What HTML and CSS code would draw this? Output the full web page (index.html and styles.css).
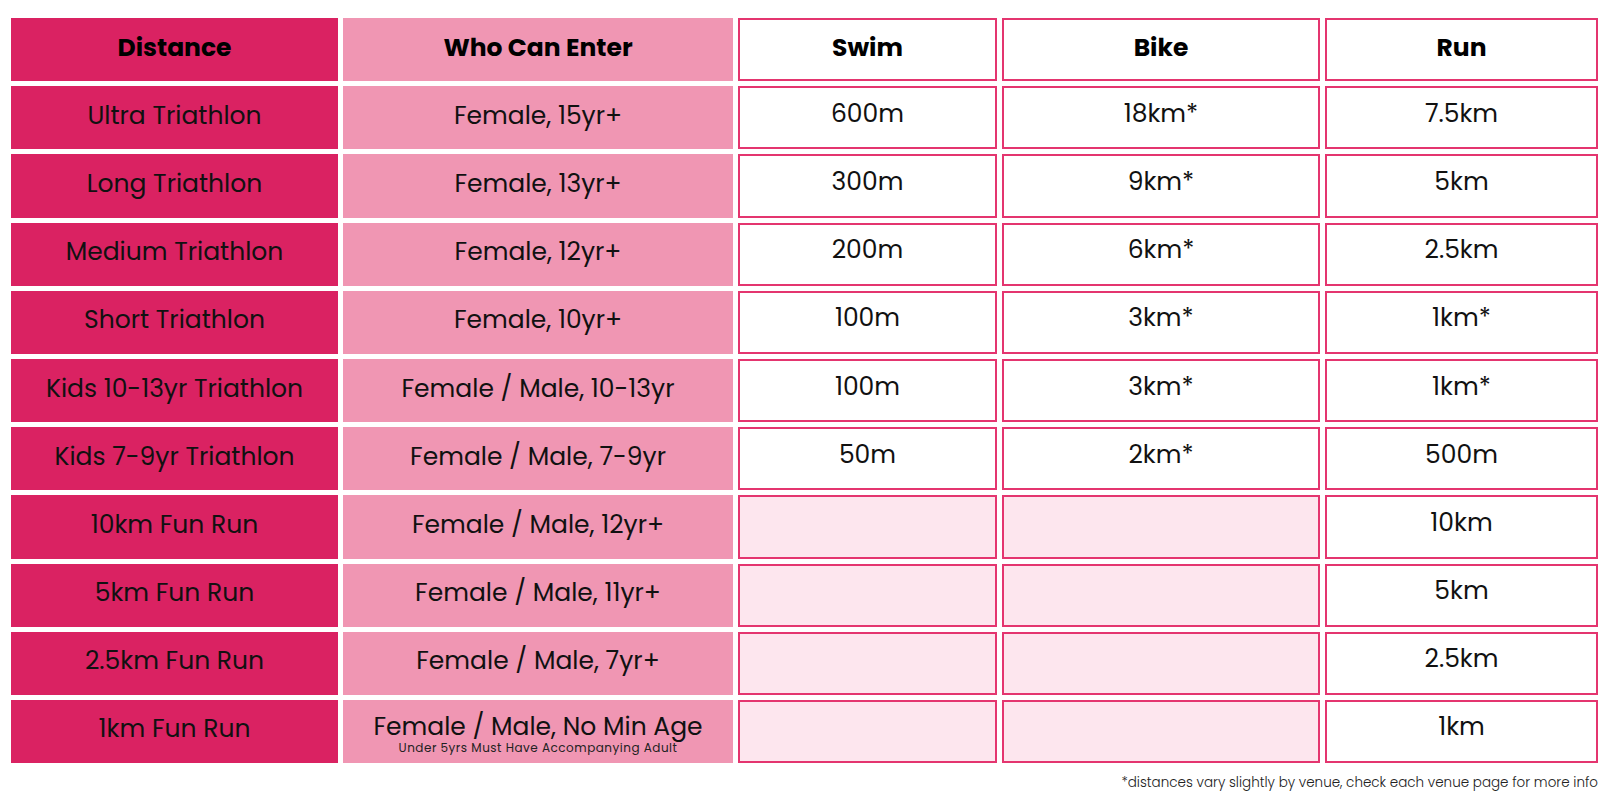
FILE: index.html
```html
<!DOCTYPE html>
<html lang="en">
<head>
<meta charset="utf-8">
<title>Distances</title>
<link rel="stylesheet" href="styles.css">
</head>
<body>
<div class="page">
  <div class="table">
    <div class="cell dist head">Distance</div>
    <div class="cell who head">Who Can Enter</div>
    <div class="cell val head">Swim</div>
    <div class="cell val head">Bike</div>
    <div class="cell val head">Run</div>

    <div class="cell dist">Ultra Triathlon</div>
    <div class="cell who">Female, 15yr+</div>
    <div class="cell val">600m</div>
    <div class="cell val">18km*</div>
    <div class="cell val">7.5km</div>

    <div class="cell dist">Long Triathlon</div>
    <div class="cell who">Female, 13yr+</div>
    <div class="cell val">300m</div>
    <div class="cell val">9km*</div>
    <div class="cell val">5km</div>

    <div class="cell dist">Medium Triathlon</div>
    <div class="cell who">Female, 12yr+</div>
    <div class="cell val">200m</div>
    <div class="cell val">6km*</div>
    <div class="cell val">2.5km</div>

    <div class="cell dist">Short Triathlon</div>
    <div class="cell who">Female, 10yr+</div>
    <div class="cell val">100m</div>
    <div class="cell val">3km*</div>
    <div class="cell val">1km*</div>

    <div class="cell dist">Kids 10-13yr Triathlon</div>
    <div class="cell who">Female / Male, 10-13yr</div>
    <div class="cell val">100m</div>
    <div class="cell val">3km*</div>
    <div class="cell val">1km*</div>

    <div class="cell dist">Kids 7-9yr Triathlon</div>
    <div class="cell who">Female / Male, 7-9yr</div>
    <div class="cell val">50m</div>
    <div class="cell val">2km*</div>
    <div class="cell val">500m</div>

    <div class="cell dist">10km Fun Run</div>
    <div class="cell who">Female / Male, 12yr+</div>
    <div class="cell val empty"></div>
    <div class="cell val empty"></div>
    <div class="cell val">10km</div>

    <div class="cell dist">5km Fun Run</div>
    <div class="cell who">Female / Male, 11yr+</div>
    <div class="cell val empty"></div>
    <div class="cell val empty"></div>
    <div class="cell val">5km</div>

    <div class="cell dist">2.5km Fun Run</div>
    <div class="cell who">Female / Male, 7yr+</div>
    <div class="cell val empty"></div>
    <div class="cell val empty"></div>
    <div class="cell val">2.5km</div>

    <div class="cell dist">1km Fun Run</div>
    <div class="cell who stack">
      <span class="main">Female / Male, No Min Age</span>
      <span class="sub">Under 5yrs Must Have Accompanying Adult</span>
    </div>
    <div class="cell val empty"></div>
    <div class="cell val empty"></div>
    <div class="cell val">1km</div>
  </div>
  <p class="note">*distances vary slightly by venue, check each venue page for more info</p>
</div>
</body>
</html>
```

FILE: styles.css
```css
html, body {
  margin: 0;
  padding: 0;
  background: #ffffff;
}

body {
  font-family: "Poppins", "Inter", "Noto Sans", sans-serif;
  color: #111111;
}

.page {
  padding: 18px 12px 0 11px;
}

.table {
  display: grid;
  grid-template-columns: 327px 390px 259px 318px 273px;
  grid-auto-rows: 63.2px;
  gap: 5px;
}

.cell {
  display: flex;
  align-items: center;
  justify-content: center;
  text-align: center;
  font-size: 25px;
  font-weight: 400;
  line-height: 30px;
  box-sizing: border-box;
  padding-bottom: 4px;
  white-space: nowrap;
}

.dist {
  background: #da2262;
}

.who {
  background: #f096b3;
}

.val {
  background: #ffffff;
  border: 2px solid #e4356f;
  padding-bottom: 8px;
}

.val.empty {
  background: #fde6ee;
}

.head {
  font-weight: 700;
  color: #000000;
  padding-bottom: 4px;
}

.val.head {
  padding-bottom: 4px;
}

.stack {
  flex-direction: column;
  justify-content: flex-start;
  padding-top: 13px;
  padding-bottom: 0;
}

.stack .main {
  display: block;
  line-height: 28px;
}

.stack .sub {
  display: block;
  font-size: 12px;
  line-height: 14px;
  letter-spacing: 0.5px;
  color: #222222;
}

.note {
  margin: 10px 0 0 0;
  text-align: right;
  font-size: 13.5px;
  font-weight: 300;
  color: #222222;
}
```
